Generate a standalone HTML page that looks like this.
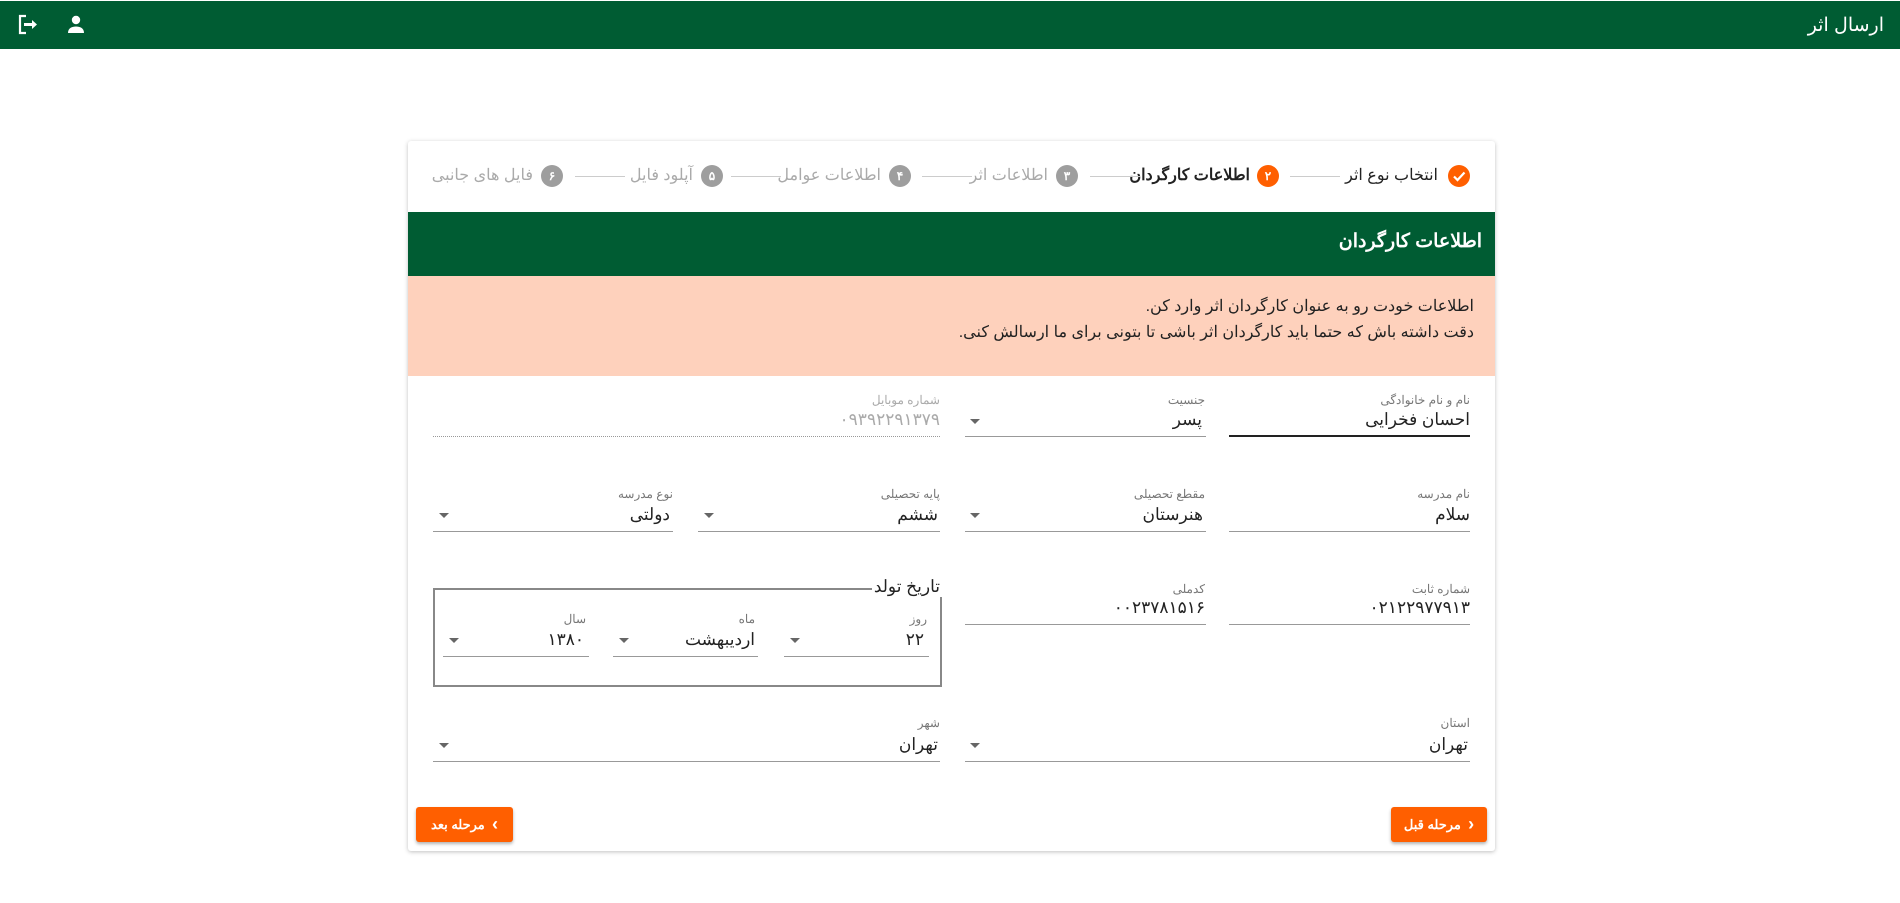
<!DOCTYPE html>
<html><head><meta charset="utf-8"><style>
*{margin:0;padding:0;box-sizing:border-box}
body{width:1900px;height:903px;background:#fff;font-family:"Liberation Sans","Noto Sans CJK SC",sans-serif;position:relative;overflow:hidden;direction:rtl}
.a{position:absolute}
.hdr{left:0;top:1px;width:1900px;height:48px;background:#005c33}
.card{left:408px;top:141px;width:1087px;height:710px;background:#fff;border-radius:3px;box-shadow:0 1px 4px rgba(0,0,0,.25)}
.lbl{font-size:12px;color:#777;white-space:nowrap}
.val{font-size:17px;color:#222;white-space:nowrap}
.line{height:1px;background:#999}
.tri{width:0;height:0;border-left:5px solid transparent;border-right:5px solid transparent;border-top:5px solid #666}
.step{font-size:16px;white-space:nowrap;top:165px}
.circ{width:22px;height:22px;border-radius:50%;color:#fff;font-size:12px;text-align:center;line-height:22px;top:165px;font-weight:bold}
.sl{height:1px;background:#ccc;top:176px}
.btn{background:#ff5f00;color:#fff;font-size:13px;font-weight:bold;border-radius:3px;box-shadow:0 2px 3px rgba(0,0,0,.3);text-align:center;line-height:35px}
.btn b{font-size:18px;vertical-align:-1px}
</style></head><body>
<div class="a hdr"></div>
<div class="a" style="right:16px;top:14px;color:#fff;font-size:19px">ارسال اثر</div>
<svg class="a" style="left:18px;top:14px" width="21" height="21" viewBox="0 0 21 21"><path d="M8 2H2v17h6" fill="none" stroke="#fff" stroke-width="2.2"/><path d="M6 10.5h9" stroke="#fff" stroke-width="3"/><path d="M14 6l5 4.5-5 4.5z" fill="#fff"/></svg>
<svg class="a" style="left:67px;top:15px" width="18" height="19" viewBox="0 0 18 19"><circle cx="9" cy="5" r="4.2" fill="#fff"/><path d="M1 18c0-5 4-6.5 8-6.5s8 1.5 8 6.5z" fill="#fff"/></svg>

<div class="a card"></div>
<div class="a circ" style="left:1448px;background:#ff5f00"><svg width="22" height="22" viewBox="0 0 22 22"><path d="M6 11.5l3.5 3.5 7-7.5" fill="none" stroke="#fff" stroke-width="2.2"/></svg></div>
<div class="a step" style="right:462px;color:#222">انتخاب نوع اثر</div>
<div class="a sl" style="left:1290px;width:50px"></div>
<div class="a circ" style="left:1257px;background:#ff5f00">۲</div>
<div class="a step" style="right:650px;color:#222;font-weight:bold">اطلاعات کارگردان</div>
<div class="a sl" style="left:1090px;width:50px"></div>
<div class="a circ" style="left:1056px;background:#9e9e9e">۳</div>
<div class="a step" style="right:852px;color:#aaa">اطلاعات اثر</div>
<div class="a sl" style="left:922px;width:50px"></div>
<div class="a circ" style="left:889px;background:#9e9e9e">۴</div>
<div class="a step" style="right:1019px;color:#aaa">اطلاعات عوامل</div>
<div class="a sl" style="left:731px;width:50px"></div>
<div class="a circ" style="left:701px;background:#9e9e9e">۵</div>
<div class="a step" style="right:1207px;color:#aaa">آپلود فایل</div>
<div class="a sl" style="left:575px;width:50px"></div>
<div class="a circ" style="left:541px;background:#9e9e9e">۶</div>
<div class="a step" style="right:1367px;color:#aaa">فایل های جانبی</div>

<div class="a" style="left:408px;top:212px;width:1087px;height:64px;background:#005c33"></div>
<div class="a" style="right:418px;top:230px;color:#fff;font-size:19px;font-weight:bold">اطلاعات کارگردان</div>
<div class="a" style="left:408px;top:276px;width:1087px;height:100px;background:#fed1bc"></div>
<div class="a" style="right:426px;top:294px;color:#222;font-size:16px;line-height:26px;white-space:nowrap">اطلاعات خودت رو به عنوان کارگردان اثر وارد کن.<br>دقت داشته باش که حتما باید کارگردان اثر باشی تا بتونی برای ما ارسالش کنی.</div>

<div class="a lbl" style="right:430px;top:393px">نام و نام خانوادگی</div>
<div class="a val" style="right:430px;top:410px">احسان فخرایی</div>
<div class="a" style="left:1229px;top:435px;width:241px;height:2px;background:#222"></div>
<div class="a lbl" style="right:695px;top:393px">جنسیت</div>
<div class="a val" style="right:698px;top:410px">پسر</div>
<div class="a tri" style="left:970px;top:419px"></div>
<div class="a line" style="left:965px;top:436px;width:241px"></div>
<div class="a lbl" style="right:960px;top:393px;color:#aaa">شماره موبایل</div>
<div class="a val" style="right:960px;top:410px;color:#aaa">۰۹۳۹۲۲۹۱۳۷۹</div>
<div class="a" style="left:433px;top:436px;width:507px;border-top:1px dotted #999"></div>

<div class="a lbl" style="right:430px;top:487px">نام مدرسه</div>
<div class="a val" style="right:430px;top:505px">سلام</div>
<div class="a line" style="left:1229px;top:531px;width:241px"></div>
<div class="a lbl" style="right:695px;top:487px">مقطع تحصیلی</div>
<div class="a val" style="right:697px;top:505px">هنرستان</div>
<div class="a tri" style="left:970px;top:513px"></div>
<div class="a line" style="left:965px;top:531px;width:241px"></div>
<div class="a lbl" style="right:960px;top:487px">پایه تحصیلی</div>
<div class="a val" style="right:962px;top:505px">ششم</div>
<div class="a tri" style="left:704px;top:513px"></div>
<div class="a line" style="left:698px;top:531px;width:242px"></div>
<div class="a lbl" style="right:1227px;top:487px">نوع مدرسه</div>
<div class="a val" style="right:1230px;top:505px">دولتی</div>
<div class="a tri" style="left:439px;top:513px"></div>
<div class="a line" style="left:433px;top:531px;width:240px"></div>

<div class="a lbl" style="right:430px;top:582px">شماره ثابت</div>
<div class="a val" style="right:430px;top:598px">۰۲۱۲۲۹۷۷۹۱۳</div>
<div class="a line" style="left:1229px;top:624px;width:241px"></div>
<div class="a lbl" style="right:695px;top:582px">کدملی</div>
<div class="a val" style="right:695px;top:598px">۰۰۲۳۷۸۱۵۱۶</div>
<div class="a line" style="left:965px;top:624px;width:241px"></div>
<div class="a" style="left:433px;top:588px;width:509px;height:99px;border:2px solid #888"></div>
<div class="a" style="right:958px;top:577px;font-size:17px;color:#222;background:#fff;padding:0 2px">تاریخ تولد</div>
<div class="a lbl" style="right:973px;top:612px">روز</div>
<div class="a val" style="right:976px;top:630px">۲۲</div>
<div class="a tri" style="left:790px;top:638px"></div>
<div class="a line" style="left:784px;top:656px;width:145px"></div>
<div class="a lbl" style="right:1145px;top:612px">ماه</div>
<div class="a val" style="right:1145px;top:630px">اردیبهشت</div>
<div class="a tri" style="left:619px;top:638px"></div>
<div class="a line" style="left:613px;top:656px;width:145px"></div>
<div class="a lbl" style="right:1314px;top:612px">سال</div>
<div class="a val" style="right:1316px;top:630px">۱۳۸۰</div>
<div class="a tri" style="left:449px;top:638px"></div>
<div class="a line" style="left:443px;top:656px;width:146px"></div>

<div class="a lbl" style="right:430px;top:716px">استان</div>
<div class="a val" style="right:432px;top:735px">تهران</div>
<div class="a tri" style="left:970px;top:743px"></div>
<div class="a line" style="left:965px;top:761px;width:505px"></div>
<div class="a lbl" style="right:960px;top:716px">شهر</div>
<div class="a val" style="right:962px;top:735px">تهران</div>
<div class="a tri" style="left:439px;top:743px"></div>
<div class="a line" style="left:433px;top:761px;width:507px"></div>

<div class="a btn" style="left:1391px;top:807px;width:96px;height:35px"><b>‹</b>&nbsp;&nbsp;مرحله قبل</div>
<div class="a btn" style="left:416px;top:807px;width:97px;height:35px"><b>›</b>&nbsp;&nbsp;مرحله بعد</div>
</body></html>
